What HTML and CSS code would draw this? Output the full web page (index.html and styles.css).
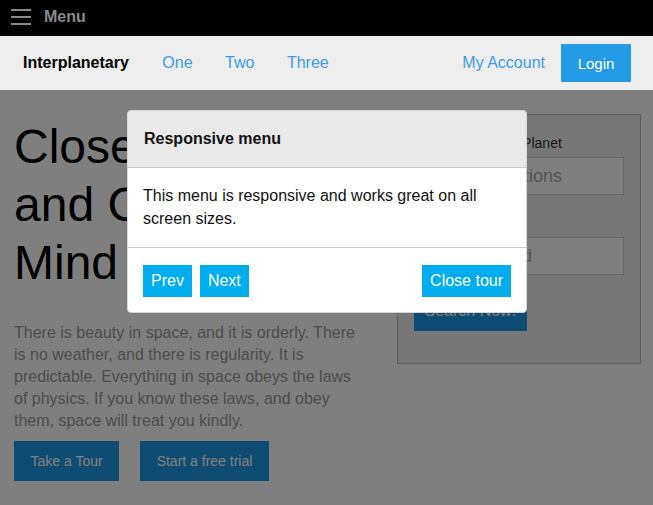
FILE: index.html
```html
<!DOCTYPE html>
<html lang="en">
<head>
<meta charset="utf-8">
<title>Interplanetary</title>
<link rel="stylesheet" href="styles.css">
</head>
<body>
<div class="topbar">
  <span class="burger"><span></span><span></span><span></span></span>
  <span class="topbar-title">Menu</span>
</div>
<nav class="navbar">
  <span class="brand">Interplanetary</span>
  <a class="nav-link" href="#">One</a>
  <a class="nav-link" href="#">Two</a>
  <a class="nav-link" href="#">Three</a>
  <span class="spacer"></span>
  <a class="nav-link" href="#">My Account</a>
  <a class="btn-login" href="#">Login</a>
</nav>
<main class="main">
  <div class="content">
    <section class="hero">
      <h1 class="hero-title">Close to Earth and Close to Mind</h1>
      <p class="hero-text">There is beauty in space, and it is orderly. There is no weather, and there is regularity. It is predictable. Everything in space obeys the laws of physics. If you know these laws, and obey them, space will treat you kindly.</p>
      <div class="hero-actions">
        <a class="btn-primary" href="#">Take a Tour</a>
        <a class="btn-primary" href="#">Start a free trial</a>
      </div>
    </section>
    <form class="search-box">
      <label class="field-label">Your Destination Planet</label>
      <input class="field-input" placeholder="Any Destinations">
      <label class="field-label second">Departure</label>
      <input class="field-input" placeholder="Select period">
      <button class="btn-search" type="button">Search Now!</button>
    </form>
  </div>
  <div class="overlay"></div>
  <div class="modal">
    <div class="modal-header">Responsive menu</div>
    <div class="modal-body">This menu is responsive and works great on all screen sizes.</div>
    <div class="modal-footer">
      <button class="btn-tour" type="button">Prev</button>
      <button class="btn-tour" type="button">Next</button>
      <span class="spacer"></span>
      <button class="btn-tour" type="button">Close tour</button>
    </div>
  </div>
</main>
</body>
</html>
```
FILE: styles.css
```css
* { box-sizing: border-box; }
html, body { margin: 0; padding: 0; }
body {
  font-family: "Liberation Sans", Arial, sans-serif;
  font-size: 16px;
  color: #222;
  background: #fff;
  width: 653px;
  height: 505px;
  overflow: hidden;
}
a { text-decoration: none; }

.topbar {
  height: 36px;
  background: #000;
  display: flex;
  align-items: center;
  padding-left: 11px;
}
.burger {
  display: flex;
  flex-direction: column;
  gap: 5px;
  width: 20px;
  margin-right: 13px;
  margin-top: -2px;
}
.burger span {
  display: block;
  height: 2px;
  background: #8a8a8a;
}
.topbar-title {
  color: #8a8a8a;
  font-weight: bold;
  font-size: 16px;
  margin-top: -3px;
}

.navbar {
  height: 54px;
  background: #eee;
  display: flex;
  align-items: center;
  padding: 0 22px 0 23px;
  gap: 32.5px;
}
.brand {
  font-weight: bold;
  color: #000;
  margin-right: 1px;
}
.nav-link {
  color: #3d9be6;
}
.spacer { flex: 1; }
.btn-login {
  margin-left: -16.5px;
  background: #239be6;
  color: #fff;
  font-size: 15px;
  height: 38px;
  width: 70px;
  justify-content: center;
  display: flex;
  align-items: center;
}

.main {
  position: relative;
  height: 415px;
  overflow: hidden;
}
.content {
  display: grid;
  grid-template-columns: 1fr 244px;
  gap: 16px;
  padding: 24px 12px 0 14px;
  align-items: start;
}
.hero-title {
  margin: 4px 0 30px;
  font-size: 48px;
  line-height: 58px;
  font-weight: normal;
  color: #000;
}
.hero-text {
  margin: 0;
  line-height: 22px;
  color: #999;
  max-width: 345px;
}
.hero-actions {
  display: flex;
  gap: 21px;
  margin-top: 9px;
}
.btn-primary {
  background: #1f98e6;
  color: #fff;
  font-size: 14px;
  height: 40px;
  padding: 0 16.5px;
  display: flex;
  align-items: center;
}

.search-box {
  margin: 0;
  background: #eee;
  border: 1px solid #bbb;
  padding: 18px 16px 32px;
  display: flex;
  flex-direction: column;
}
.field-label {
  font-size: 14px;
  line-height: 20px;
  color: #333;
  margin-bottom: 4px;
  padding-left: 2px;
}
.field-label.second { margin-top: 18px; }
.field-input {
  height: 38px;
  border: 1px solid #ccc;
  background: #fff;
  padding: 0 12px;
  font-family: inherit;
  font-size: 18px;
}
.field-input::placeholder { color: #aaa; }
.btn-search {
  margin-top: 16px;
  align-self: flex-start;
  height: 40px;
  padding: 0 10.5px;
  border: 0;
  background: #1f98e6;
  color: #fff;
  font-family: inherit;
  font-size: 16px;
}

.overlay {
  position: absolute;
  inset: 0;
  background: rgba(0, 0, 0, 0.5);
}
.modal {
  position: absolute;
  left: 127px;
  top: 20px;
  width: 400px;
  background: #fff;
  border: 1px solid #d6d6d6;
  border-radius: 4px;
  overflow: hidden;
}
.modal-header {
  height: 57px;
  background: #e9e9e9;
  border-bottom: 1px solid #ccc;
  padding: 0 16px;
  display: flex;
  align-items: center;
  font-weight: bold;
  color: #111;
}
.modal-body {
  padding: 16px 15px 17px 15px;
  line-height: 23px;
  border-bottom: 1px solid #ccc;
  color: #111;
}
.modal-footer {
  display: flex;
  gap: 8px;
  padding: 17px 15px 15px 15px;
}
.btn-tour {
  height: 32px;
  padding: 0 8px;
  border: 0;
  background: #00aeef;
  color: #fff;
  font-family: inherit;
  font-size: 16px;
}
```
